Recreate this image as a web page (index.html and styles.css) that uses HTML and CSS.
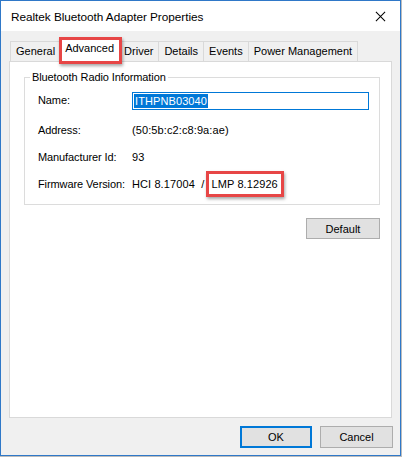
FILE: index.html
```html
<!DOCTYPE html>
<html>
<head>
<meta charset="utf-8">
<link rel="stylesheet" href="styles.css">
</head>
<body>
<div class="window">
  <div class="titlebar">
    <span class="title">Realtek Bluetooth Adapter Properties</span>
    <svg class="close" width="12" height="12" viewBox="0 0 12 12"><path d="M1 1 L11 11 M11 1 L1 11" stroke="#000" stroke-width="1.1" fill="none"/></svg>
  </div>
  <div class="content">
    <div class="tabs">
      <div class="tab first">General</div>
      <div class="tab active">Advanced</div>
      <div class="tab after-active">Driver</div>
      <div class="tab">Details</div>
      <div class="tab">Events</div>
      <div class="tab">Power Management</div>
    </div>
    <div class="panel">
      <fieldset class="group">
        <legend>Bluetooth Radio Information</legend>
        <div class="rows">
          <div class="label">Name:</div>
          <div class="value"><div class="textbox"><span class="selected">ITHPNB03040</span></div></div>
          <div class="label">Address:</div>
          <div class="value">(50:5b:c2:c8:9a:ae)</div>
          <div class="label">Manufacturer Id:</div>
          <div class="value">93</div>
          <div class="label">Firmware Version:</div>
          <div class="value">HCI 8.17004&nbsp; / <span class="mark">LMP 8.12926</span></div>
        </div>
      </fieldset>
      <div class="panel-actions">
        <button class="btn default-btn">Default</button>
      </div>
    </div>
    <div class="dialog-actions">
      <button class="btn primary">OK</button>
      <button class="btn">Cancel</button>
    </div>
  </div>
</div>
</body>
</html>
```
FILE: styles.css
```css
html, body {
  margin: 0;
  padding: 0;
  background: #bcbcbc;
}
body {
  font-family: "Liberation Sans", Arial, sans-serif;
  font-size: 11px;
  color: #000;
}
.window {
  box-sizing: border-box;
  width: 401px;
  height: 456px;
  border: 1px solid #2f78c8;
  background: #f0f0f0;
  display: flex;
  flex-direction: column;
}
.titlebar {
  height: 30px;
  background: #fff;
  display: flex;
  align-items: center;
  justify-content: space-between;
  padding: 0 10px 0 10px;
  flex: none;
}
.title {
  font-size: 11.8px;
  letter-spacing: -0.05px;
  padding-top: 1px;
}
.close {
  display: block;
  width: 11px;
  height: 11px;
  margin-right: 4px;
}
.content {
  flex: 1;
  display: flex;
  flex-direction: column;
  padding: 7px 8px 7px 8px;
  min-height: 0;
}
.tabs {
  display: flex;
  align-items: flex-end;
  padding-left: 1px;
  flex: none;
}
.tab {
  box-sizing: border-box;
  height: 20px;
  line-height: 18px;
  padding: 0 5px;
  border: 1px solid #d9d9d9;
  border-bottom: none;
  border-left: none;
  background: #f0f0f0;
  letter-spacing: 0;
  white-space: nowrap;
}
.tab.first {
  border-left: 1px solid #d9d9d9;
}
.tab.active {
  position: relative;
  z-index: 1;
  height: 24px;
  margin: 0 -2px -1px -2px;
  padding: 0 5px;
  line-height: 19px;
  background: #fff;
  border: 1px solid #d9d9d9;
  border-bottom: none;
}
.tab.active::after {
  content: "";
  position: absolute;
  left: -1px;
  top: -2px;
  right: -3px;
  bottom: -2px;
  border: 3px solid #e74646;
  box-shadow: 1px 2px 3px rgba(0,0,0,0.35);
}
.tab.after-active {
  padding-left: 6px;
}
.panel {
  flex: 1;
  background: #fff;
  border: 1px solid #d9d9d9;
  display: flex;
  flex-direction: column;
  min-height: 0;
}
.group {
  margin: 8px 11px 0 14px;
  padding: 0 0 12px 0;
  border: 1px solid #dcdcdc;
  min-width: 0;
}
.group legend {
  margin-left: 5px;
  padding: 0 2px;
  line-height: 14px;
  letter-spacing: -0.1px;
}
.rows {
  display: grid;
  grid-template-columns: 94px 1fr;
  grid-template-rows: 19px 16px 16px 16px;
  row-gap: 11px;
  padding: 8px 10px 0 13px;
  line-height: 16px;
  letter-spacing: -0.1px;
}
.value {
  letter-spacing: 0.1px;
}
.label, .value {
  white-space: nowrap;
}
.textbox {
  box-sizing: border-box;
  height: 18px;
  border: 1px solid #0078d7;
  padding: 1px 1px;
  line-height: 14px;
}
.selected {
  background: #0078d7;
  color: #fff;
  display: inline-block;
  padding: 0 1px;
}
.mark {
  display: inline-block;
  border: 3px solid #e74646;
  padding: 2px 3px 2px 3px;
  margin: -6px 0 -6px -2px;
  box-shadow: 1px 2px 3px rgba(0,0,0,0.35);
}
.panel-actions {
  display: flex;
  justify-content: flex-end;
  padding: 13px 11px 0 0;
}
.btn {
  box-sizing: border-box;
  font-family: "Liberation Sans", Arial, sans-serif;
  font-size: 11px;
  letter-spacing: 0;
  color: #000;
  background: #e1e1e1;
  border: 1px solid #adadad;
  border-radius: 0;
  padding: 0;
  margin: 0;
}
.default-btn {
  width: 74px;
  height: 21px;
}
.dialog-actions {
  flex: none;
  display: flex;
  justify-content: flex-end;
  gap: 8px;
  margin: 8px -1px 0 0;
}
.dialog-actions .btn {
  width: 73px;
  height: 22px;
}
.dialog-actions .btn.primary {
  width: 72px;
  border: 2px solid #0078d7;
}
```
